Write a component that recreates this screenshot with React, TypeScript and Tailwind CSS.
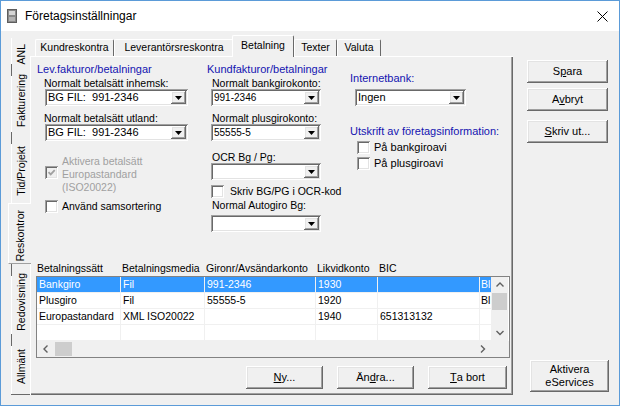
import React from "react";

const raised =
  "shadow-[inset_-1px_-1px_0_#696969,inset_1px_1px_0_#ffffff,inset_-2px_-2px_0_#a0a0a0,inset_2px_2px_0_#e3e3e3]";
const sunken =
  "shadow-[inset_1px_1px_0_#a0a0a0,inset_-1px_-1px_0_#ffffff,inset_2px_2px_0_#696969,inset_-2px_-2px_0_#e3e3e3]";
const BLUE = "text-[#1414b0]";

function DownArrow() {
  return (
    <svg width="7" height="4" viewBox="0 0 7 4">
      <path d="M0 0h7L3.5 4z" fill="#000" />
    </svg>
  );
}

function Combo({ value, className, textClass }: { value: string; className: string; textClass: string }) {
  return (
    <div className={`flex h-[17px] bg-white ${sunken} ${className}`}>
      <span className={`flex flex-1 items-center overflow-hidden whitespace-pre pl-[3px] ${textClass}`}>{value}</span>
      <span className={`my-[2px] mr-[2px] flex w-[15px] items-center justify-center bg-[#f0f0f0] ${raised}`}>
        <DownArrow />
      </span>
    </div>
  );
}

function Check({ checked = false, disabled = false }: { checked?: boolean; disabled?: boolean }) {
  return (
    <span
      className={`flex h-[13px] w-[13px] shrink-0 items-center justify-center ${disabled ? "bg-[#f0f0f0]" : "bg-white"} ${sunken}`}
    >
      {checked && (
        <svg width="9" height="9" viewBox="0 0 9 9">
          <path d="M1.5 4.2l2.2 2.2 4-4.2" fill="none" stroke={disabled ? "#a0a0a0" : "#000"} strokeWidth="1.8" />
        </svg>
      )}
    </span>
  );
}

function Btn({ children, className }: { children: React.ReactNode; className: string }) {
  return (
    <div className={`flex items-center justify-center bg-[#f0f0f0] text-[11px] ${raised} ${className}`}>{children}</div>
  );
}

function Chevron({ dir }: { dir: "up" | "down" | "left" | "right" }) {
  const d = {
    up: "M0.5 4.5L4 1l3.5 3.5",
    down: "M0.5 1L4 4.5 7.5 1",
    left: "M4.5 0.5L1 4l3.5 3.5",
    right: "M1 0.5L4.5 4 1 7.5",
  }[dir];
  const vertical = dir === "up" || dir === "down";
  return (
    <svg width={vertical ? 8 : 6} height={vertical ? 6 : 8} viewBox={vertical ? "0 0 8 6" : "0 0 6 8"}>
      <path d={d} fill="none" stroke="#606060" strokeWidth="1.4" />
    </svg>
  );
}

const SIDE_TABS = [
  { label: "ANL", h: "h-[26px]", line: false },
  { label: "Fakturering", h: "h-[68px]", line: true },
  { label: "Tid/Projekt", h: "h-[71px]", line: true },
  { label: "Reskontror", h: "h-[61px]", selected: true },
  { label: "Redovisning", h: "h-[70px]", line: true },
  { label: "Allmänt", h: "h-[61px]", line: true, last: true },
];

const TOP_TABS = [
  { label: "Kundreskontra", w: "w-[79px]" },
  { label: "Leverantörsreskontra", w: "w-[120px]" },
  { label: "Betalning", w: "w-[62px]", selected: true },
  { label: "Texter", w: "w-[43px]" },
  { label: "Valuta", w: "w-[44px]" },
];

const COL_W = ["w-[84px]", "w-[84px]", "w-[111px]", "w-[62px]", "w-[102px]"];
const HEADERS = ["Betalningssätt", "Betalningsmedia", "Gironr/Avsändarkonto", "Likvidkonto", "BIC"];
const ROWS = [
  ["Bankgiro", "Fil", "991-2346", "1930", "", "Bl"],
  ["Plusgiro", "Fil", "55555-5", "1920", "", "Bl"],
  ["Europastandard", "XML ISO20022", "", "1940", "651313132", ""],
  ["", "", "", "", "", ""],
];

export default function App() {
  return (
    <div className="h-[408px] w-[620px] bg-white font-['Liberation_Sans',Arial,sans-serif] text-black">
      <div className="flex h-[406px] flex-col border border-[#5b9bd8]">
        {/* title bar */}
        <div className="flex h-[30px] items-center bg-white">
          <svg className="ml-[6px]" width="10" height="14" viewBox="0 0 10 14">
            <rect x="0.5" y="0.5" width="9" height="13" fill="#8a8a8a" stroke="#5e5e5e" />
            <rect x="2" y="2" width="6" height="4" fill="#d6d6d6" />
            <rect x="2" y="8" width="6" height="4" fill="#b3b3b3" />
          </svg>
          <span className="ml-[8px] text-[12px]">Företagsinställningar</span>
          <svg className="ml-auto mr-[11px]" width="11" height="11" viewBox="0 0 11 11">
            <path d="M0.5 0.5l10 10M10.5 0.5l-10 10" stroke="#000" strokeWidth="1" />
          </svg>
        </div>

        {/* body */}
        <div className="flex flex-1 bg-[#f0f0f0] text-[10.5px]">
          {/* vertical tabs */}
          <div className="ml-[7px] mt-[7px] flex w-[22px] flex-col">
            {SIDE_TABS.map((t) =>
              t.selected ? (
                <div
                  key={t.label}
                  className={`relative z-10 flex w-[23px] items-center justify-center border-l border-t border-b border-l-white border-t-white border-b-[#a0a0a0] bg-[#f0f0f0] pt-[4px] ${t.h}`}
                >
                  <span className="block rotate-180 leading-none [writing-mode:vertical-rl]">{t.label}</span>
                </div>
              ) : (
                <div key={t.label} className={`ml-[3px] flex ${t.h} ${t.last ? "border-b border-[#696969]" : ""}`}>
                  <div className="flex w-px flex-col">
                    {t.line && <span className="h-[12px] bg-[#696969]" />}
                    <span className="flex-1 bg-white" />
                  </div>
                  <div className="flex flex-1 items-center justify-center pt-[6px]">
                    <span className="block rotate-180 leading-none [writing-mode:vertical-rl]">{t.label}</span>
                  </div>
                </div>
              )
            )}
          </div>

          {/* tab frame */}
          <div className="mt-[4px] flex h-[360px] w-[483px] flex-col">
            <div className="flex h-[21px] items-end pl-[5px]">
              {TOP_TABS.map((t) => (
                <div
                  key={t.label}
                  className={`flex items-center justify-center rounded-t-[2px] border-l border-r border-t border-l-white border-t-white border-r-[#696969] bg-[#f0f0f0] ${t.w} ${
                    t.selected ? "relative z-10 -mb-px -ml-[2px] h-[22px] pb-[2px]" : "h-[17px]"
                  }`}
                >
                  {t.label}
                </div>
              ))}
            </div>

            <div className="flex flex-1 flex-col shadow-[inset_1px_1px_0_#ffffff,inset_-1px_-1px_0_#696969,inset_-2px_-2px_0_#a0a0a0]">
              {/* form columns */}
              <div className="flex h-[206px] pl-[7px] pt-[7px]">
                {/* left column */}
                <div className="flex w-[170px] flex-col">
                  <div className={`h-[13px] text-[11px] leading-[13px] ${BLUE}`}>Lev.fakturor/betalningar</div>
                  <div className="flex flex-col pl-[7px]">
                    <div className="mt-[2px] h-[11px] leading-[11px]">Normalt betalsätt inhemsk:</div>
                    <Combo value="BG FIL:  991-2346" className="ml-px w-[143px]" textClass="text-[11px]" />
                    <div className="mt-[7px] h-[11px] leading-[11px]">Normalt betalsätt utland:</div>
                    <Combo value="BG FIL:  991-2346" className="ml-px w-[143px]" textClass="text-[11px]" />
                    <div className="ml-px mt-[14px] flex items-start gap-[4px]">
                      <span className="mt-[11px]">
                        <Check checked disabled />
                      </span>
                      <span className="leading-[13px] text-[#a0a0a0]">
                        Aktivera betalsätt
                        <br />
                        Europastandard
                        <br />
                        (ISO20022)
                      </span>
                    </div>
                    <div className="ml-px mt-[6px] flex h-[13px] items-center gap-[4px]">
                      <Check />
                      <span>Använd samsortering</span>
                    </div>
                  </div>
                </div>

                {/* middle column */}
                <div className="flex w-[143px] flex-col">
                  <div className={`h-[13px] text-[11px] leading-[13px] ${BLUE}`}>Kundfakturor/betalningar</div>
                  <div className="flex flex-col pl-[5px]">
                    <div className="mt-[2px] h-[11px] leading-[11px]">Normalt bankgirokonto:</div>
                    <Combo value="991-2346" className="-ml-px w-[110px]" textClass="text-[10px]" />
                    <div className="mt-[7px] h-[11px] leading-[11px]">Normalt plusgirokonto:</div>
                    <Combo value="55555-5" className="-ml-px w-[110px]" textClass="text-[10px]" />
                    <div className="mt-[11px] h-[11px] leading-[11px]">OCR Bg / Pg:</div>
                    <Combo value="" className="-ml-px w-[110px]" textClass="text-[10px]" />
                    <div className="-ml-px mt-[5px] flex h-[13px] items-center gap-[6px]">
                      <Check />
                      <span>Skriv BG/PG i OCR-kod</span>
                    </div>
                    <div className="mt-[2px] h-[11px] leading-[11px]">Normal Autogiro Bg:</div>
                    <Combo value="" className="-ml-px mt-[4px] w-[110px]" textClass="text-[10px]" />
                  </div>
                </div>

                {/* right column */}
                <div className="flex flex-1 flex-col">
                  <div className={`mt-[9px] h-[13px] text-[11px] leading-[13px] ${BLUE}`}>Internetbank:</div>
                  <Combo value="Ingen" className="ml-[5px] mt-[4px] w-[111px]" textClass="text-[11px]" />
                  <div className={`mt-[19px] h-[13px] text-[11px] leading-[13px] ${BLUE}`}>
                    Utskrift av företagsinformation:
                  </div>
                  <div className="ml-[7px] mt-[3px] flex h-[13px] items-center gap-[4px]">
                    <Check />
                    <span className="text-[11px]">På bankgiroavi</span>
                  </div>
                  <div className="ml-[7px] mt-[3px] flex h-[13px] items-center gap-[4px]">
                    <Check />
                    <span className="text-[11px]">På plusgiroavi</span>
                  </div>
                </div>
              </div>

              {/* list header */}
              <div className="ml-[7px] flex h-[13px] leading-[13px]">
                {HEADERS.map((h, i) => (
                  <div key={h} className={`${COL_W[i]} overflow-hidden whitespace-nowrap ${i ? "pl-px" : ""}`}>
                    {h}
                  </div>
                ))}
              </div>

              {/* list */}
              <div className="ml-[6px] mt-px flex h-[82px] w-[474px] flex-col border border-[#828282] bg-white">
                <div className="flex h-[64px]">
                  <div className="flex w-[454px] flex-col">
                    {ROWS.map((r, ri) => (
                      <div
                        key={ri}
                        className={`flex h-[16px] border-b border-[#f0f0f0] leading-[15px] ${
                          ri === 0 ? "bg-[#3399ff] text-white" : ""
                        }`}
                      >
                        {r.slice(0, 5).map((c, ci) => (
                          <div
                            key={ci}
                            className={`${COL_W[ci]} overflow-hidden whitespace-nowrap border-r border-[#f0f0f0] pl-[2px]`}
                          >
                            {c}
                          </div>
                        ))}
                        <div className="w-[11px] whitespace-nowrap pl-px">{r[5]}</div>
                      </div>
                    ))}
                  </div>
                  <div className="flex w-[17px] flex-col bg-[#f0f0f0]">
                    <div className="flex h-[16px] items-center justify-center">
                      <Chevron dir="up" />
                    </div>
                    <div className="mx-px h-[17px] bg-[#cdcdcd]" />
                    <div className="flex-1" />
                    <div className="flex h-[16px] items-center justify-center">
                      <Chevron dir="down" />
                    </div>
                  </div>
                </div>
                <div className="flex h-[16px] bg-[#f0f0f0]">
                  <div className="flex w-[454px]">
                    <div className="flex w-[17px] items-center justify-center">
                      <Chevron dir="left" />
                    </div>
                    <div className="my-px ml-px w-[17px] bg-[#cdcdcd]" />
                    <div className="flex-1" />
                    <div className="flex w-[17px] items-center justify-center">
                      <Chevron dir="right" />
                    </div>
                  </div>
                  <div className="w-[17px]" />
                </div>
              </div>

              {/* list buttons */}
              <div className="mt-[8px] flex justify-end gap-[14px] pr-[6px]">
                <Btn className="h-[23px] w-[77px]">
                  <span className="underline">N</span>y...
                </Btn>
                <Btn className="h-[23px] w-[77px]">
                  Än<span className="underline">d</span>ra...
                </Btn>
                <Btn className="h-[23px] w-[79px]">
                  <span className="underline">T</span>a bort
                </Btn>
              </div>
            </div>
          </div>

          {/* dialog buttons */}
          <div className="ml-[14px] flex w-[82px] flex-col">
            <Btn className="mt-[29px] h-[23px] w-[81px]">
              S<span className="underline">p</span>ara
            </Btn>
            <Btn className="mt-[5px] h-[23px] w-[81px]">
              A<span className="underline">v</span>bryt
            </Btn>
            <Btn className="mt-[9px] h-[23px] w-[81px]">
              <span className="underline">S</span>kriv ut...
            </Btn>
            <Btn className="ml-[3px] mt-[217px] h-[32px] w-[79px] flex-col leading-[13px]">
              <span>Aktivera</span>
              <span>eServices</span>
            </Btn>
          </div>
        </div>
      </div>
    </div>
  );
}
